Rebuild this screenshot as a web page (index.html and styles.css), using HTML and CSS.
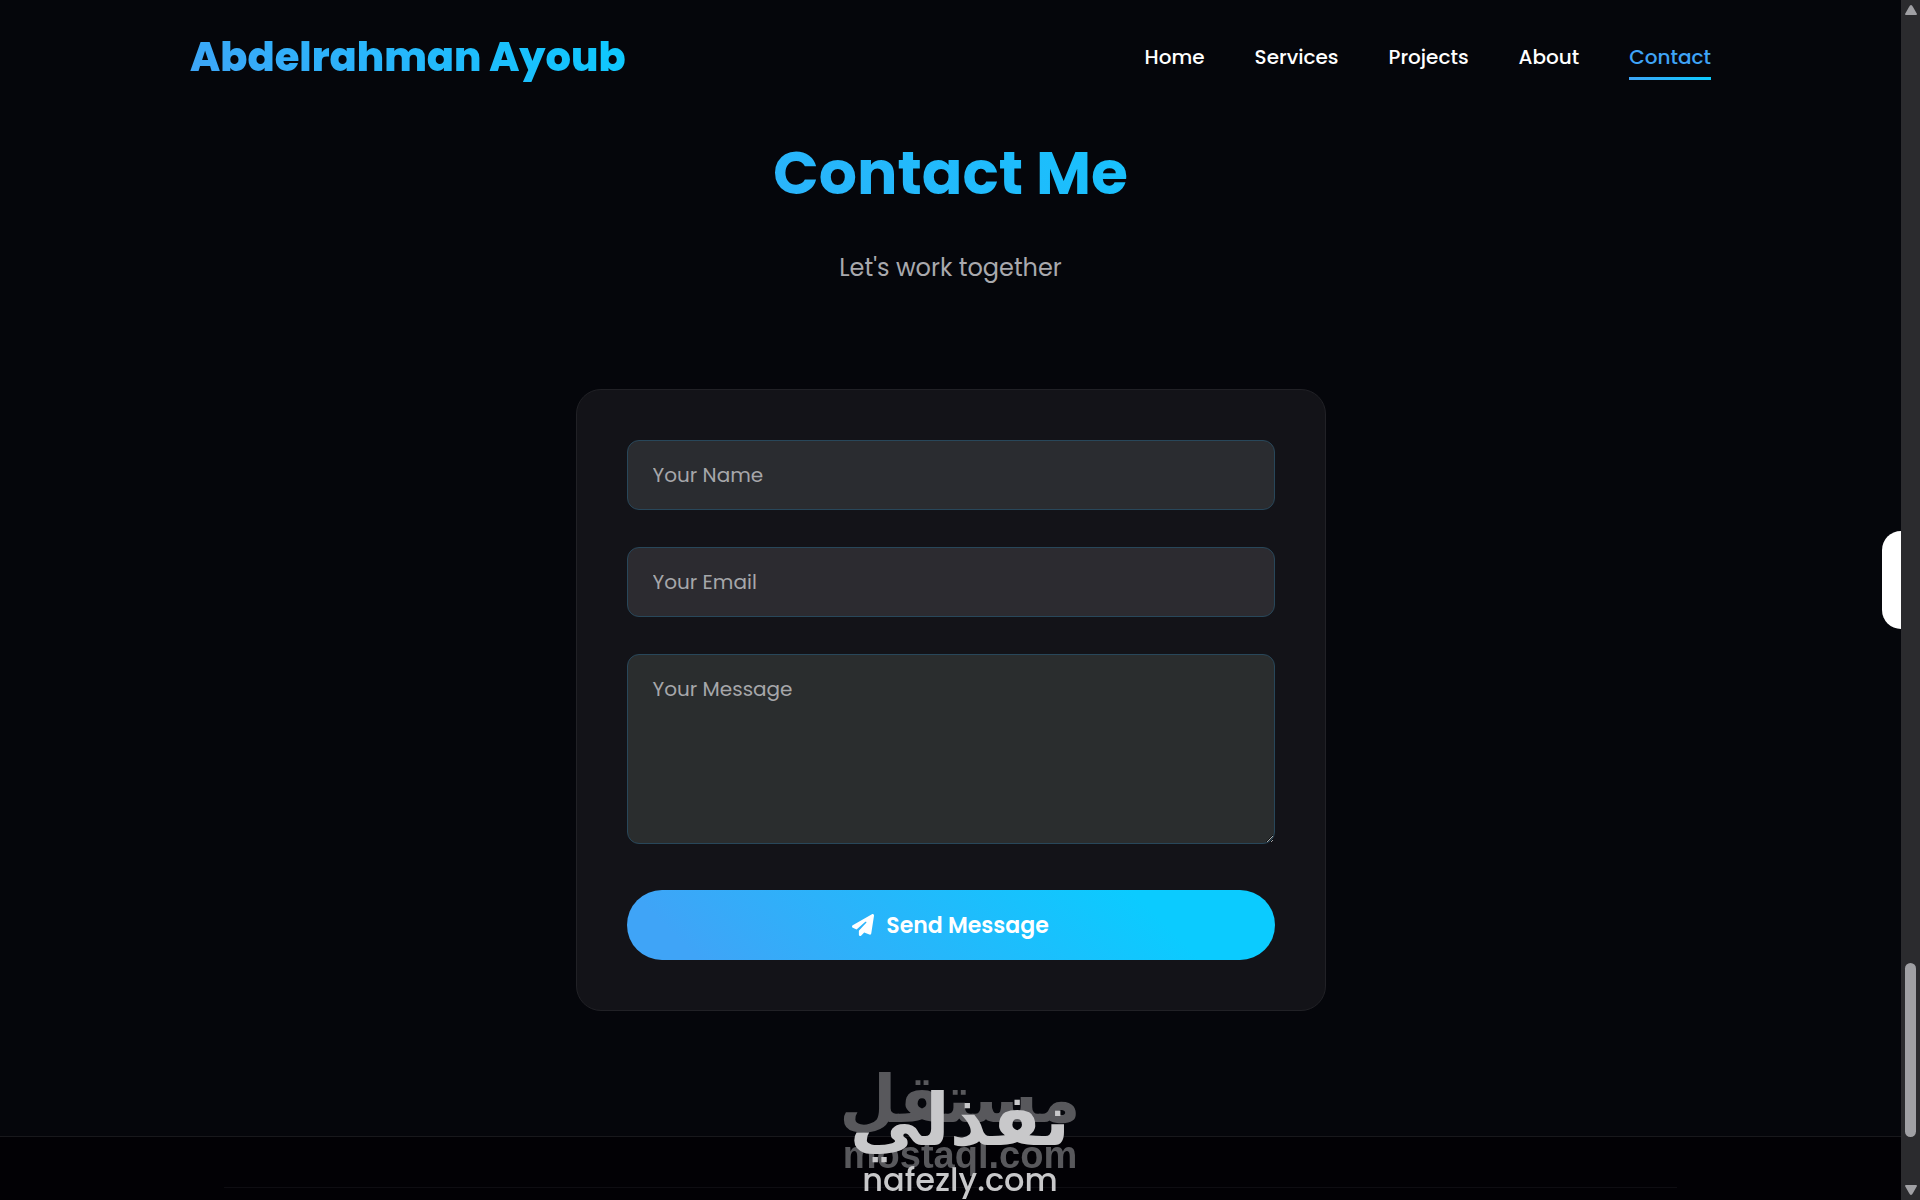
FILE: index.html
```html
<!DOCTYPE html>
<html lang="en">
<head>
  <meta charset="UTF-8" />
  <meta name="viewport" content="width=device-width, initial-scale=1.0" />
  <title>Abdelrahman Ayoub</title>
  <link rel="stylesheet" href="styles.css">
</head>
<body>

  <!-- Navigation -->
  <header class="header">
    <a href="#home" class="logo">Abdelrahman Ayoub</a>
    <nav class="navbar" aria-label="Main Navigation">
      <a href="#home">Home</a>
      <a href="#services">Services</a>
      <a href="#projects">Projects</a>
      <a href="#about">About</a>
      <a href="#contact" class="active">Contact</a>
    </nav>
  </header>

  <main>
    <!-- Contact Section -->
    <section class="contact" id="contact">
      <h1 class="heading">Contact Me</h1>
      <p class="subtitle">Let's work together</p>

      <form class="contact-form">
        <input type="text" name="name" placeholder="Your Name" aria-label="Your Name" required>
        <input type="email" name="email" placeholder="Your Email" aria-label="Your Email" required>
        <textarea name="message" placeholder="Your Message" aria-label="Your Message" required></textarea>
        <button type="submit" class="btn">
          <svg class="btn-icon" viewBox="0 0 512 512" aria-hidden="true">
            <path fill="currentColor" d="M498 6c11 7 16 20 14 32l-64 416c-2 10-8 18-16 23s-19 5-28 2l-120-50-68 74c-9 10-23 13-35 8s-21-17-21-30v-84c0-4 2-8 4-11l168-183c6-6 5-16-1-21s-15-6-21-1L106 362l-88-44C7 312 0 302 0 290s6-23 16-29L464 5c11-6 24-6 34 1z"/>
          </svg>
          Send Message
        </button>
      </form>
    </section>
  </main>

  <footer class="footer">
    <div class="footer-line"></div>
  </footer>

  <!-- Side panel handle -->
  <button type="button" class="side-tab" aria-label="Open panel"></button>

  <!-- Watermarks -->
  <div class="watermark mostaql">
    <span class="mark-ar" lang="ar" dir="rtl">مستقل</span>
    <span class="mark-en">mostaql.com</span>
  </div>
  <div class="watermark nafezly">
    <span class="mark-ar" lang="ar" dir="rtl">نفذلي</span>
    <span class="mark-en">nafezly.com</span>
  </div>

  <!-- Scrollbar -->
  <div class="scrollbar" aria-hidden="true">
    <svg viewBox="0 0 12 10"><path d="M6 0 Q7 0 8 2 L12 9 Q12 10 11 10 H1 Q0 10 0 9 L4 2 Q5 0 6 0 Z"/></svg>
    <div class="track"><div class="thumb"></div></div>
    <svg viewBox="0 0 12 10"><path d="M6 10 Q7 10 8 8 L12 1 Q12 0 11 0 H1 Q0 0 0 1 L4 8 Q5 10 6 10 Z"/></svg>
  </div>

</body>
</html>
```
FILE: styles.css
```css
* {
  margin: 0;
  padding: 0;
  box-sizing: border-box;
}

:root {
  --bg: #05060b;
  --main: #3fa4f7;
  --second: #0bcbff;
  --gradient: linear-gradient(45deg, var(--main), var(--second));
  --scrollbar: 19px;
}

body {
  min-height: 100vh;
  display: flex;
  flex-direction: column;
  padding-right: var(--scrollbar);
  background: var(--bg);
  color: #fff;
  font-family: Poppins, Inter, "Open Sans", sans-serif;
}

/* Header */
.header {
  display: flex;
  justify-content: space-between;
  align-items: center;
  height: 114px;
  padding: 0 10%;
}

.logo {
  font-size: 40px;
  font-weight: 800;
  line-height: 60px;
  text-decoration: none;
  background: var(--gradient);
  -webkit-background-clip: text;
  background-clip: text;
  color: transparent;
}

.navbar {
  display: flex;
  gap: 50px;
}

.navbar a {
  position: relative;
  font-size: 20px;
  font-weight: 500;
  line-height: 30px;
  color: #fff;
  text-decoration: none;
}

.navbar a.active {
  color: var(--main);
}

.navbar a.active::after {
  content: "";
  position: absolute;
  left: 0;
  bottom: -8px;
  width: 100%;
  height: 3px;
  background: var(--gradient);
}

/* Contact section */
.contact {
  padding: 14px 10% 125px;
  text-align: center;
}

.heading {
  font-size: 60px;
  font-weight: 700;
  line-height: 90px;
  background: linear-gradient(45deg, var(--main) 10%, var(--second) 80%);
  -webkit-background-clip: text;
  background-clip: text;
  color: transparent;
}

.subtitle {
  margin: 30px 0 101px;
  font-size: 24px;
  line-height: 40px;
  color: #a9a9ae;
}

.contact-form {
  display: flex;
  flex-direction: column;
  gap: 37px;
  max-width: 750px;
  margin: 0 auto;
  padding: 50px;
  background: #131318;
  border: 1px solid #212126;
  border-radius: 25px;
}

.contact-form input,
.contact-form textarea {
  width: 100%;
  height: 70px;
  padding: 19px 25px;
  background: #2a2c30;
  border: 1px solid #28475a;
  border-radius: 12px;
  color: #fff;
  font-family: inherit;
  font-size: 20px;
  line-height: 30px;
  outline: none;
}

.contact-form input[type="email"] {
  background: #2c2b30;
}

.contact-form textarea {
  display: block;
  height: 190px;
  margin-bottom: 9px;
  background: #2a2d2e;
  resize: vertical;
}

.contact-form ::placeholder {
  color: #a6a7aa;
  opacity: 1;
}

.btn {
  display: flex;
  justify-content: center;
  align-items: center;
  gap: 12px;
  height: 70px;
  border: none;
  border-radius: 35px;
  background: linear-gradient(45deg, var(--main) 10%, var(--second) 80%);
  color: #fff;
  font-family: inherit;
  font-size: 22px;
  font-weight: 600;
  cursor: pointer;
}

.btn-icon {
  width: 22px;
  height: 22px;
}

/* Footer */
.footer {
  flex: 1;
  padding: 50px 224px 0;
  background: #020105;
  border-top: 1px solid #18181c;
}

.footer-line {
  border-top: 1px solid #0e0d12;
}

/* Side handle */
.side-tab {
  position: fixed;
  top: 531px;
  right: var(--scrollbar);
  width: 19px;
  height: 98px;
  border: none;
  border-radius: 20px 0 0 20px;
  background: #fff;
}

/* Watermarks */
.watermark {
  position: fixed;
  left: 0;
  right: 0;
  display: flex;
  flex-direction: column;
  align-items: center;
  pointer-events: none;
}

.mark-ar {
  font-family: "DejaVu Sans", sans-serif;
  font-weight: 700;
}

.mostaql {
  bottom: 28px;
  color: #58585c;
}

.mostaql .mark-ar {
  font-size: 66px;
  line-height: 76px;
}

.mostaql .mark-en {
  font-family: "Liberation Sans", sans-serif;
  font-size: 38px;
  font-weight: 700;
  line-height: 34px;
}

.nafezly {
  bottom: 0;
  color: #c8c8ca;
}

.nafezly .mark-ar {
  font-size: 72px;
  line-height: 80px;
}

.nafezly .mark-en {
  font-size: 32px;
  font-weight: 500;
  line-height: 40px;
}

/* Scrollbar */
.scrollbar {
  position: fixed;
  top: 0;
  right: 0;
  bottom: 0;
  width: var(--scrollbar);
  display: flex;
  flex-direction: column;
  align-items: center;
  padding: 5px 0;
  background: #2b2b2e;
}

.scrollbar svg {
  width: 12px;
  height: 10px;
  fill: #a0a0a4;
}

.track {
  flex: 1;
  display: flex;
  flex-direction: column;
  justify-content: flex-end;
  padding-bottom: 48px;
}

.thumb {
  width: 11px;
  height: 174px;
  border-radius: 6px;
  background: #a0a0a4;
}
```
